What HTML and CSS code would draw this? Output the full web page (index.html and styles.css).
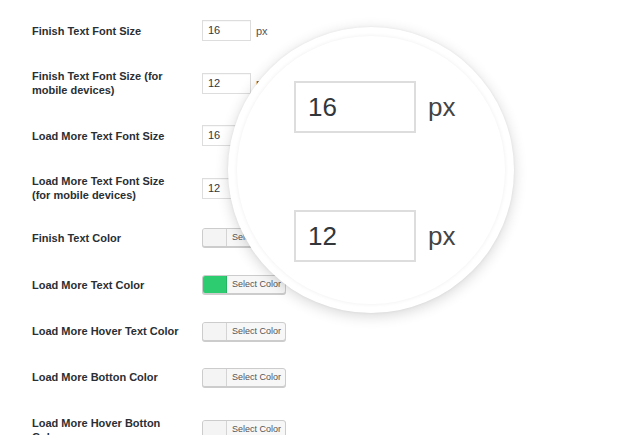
FILE: index.html
```html
<!DOCTYPE html>
<html>
<head>
<meta charset="utf-8">
<link rel="stylesheet" href="styles.css">
</head>
<body>
<div class="page">
  <div class="form">
    <div class="row r53">
      <div class="label">Finish Text Font Size</div>
      <div class="field"><span class="input">16</span><span class="unit">px</span></div>
    </div>
    <div class="row r52">
      <div class="label">Finish Text Font Size (for mobile devices)</div>
      <div class="field"><span class="input">12</span><span class="unit">px</span></div>
    </div>
    <div class="row r53">
      <div class="label">Load More Text Font Size</div>
      <div class="field"><span class="input">16</span><span class="unit">px</span></div>
    </div>
    <div class="row r52">
      <div class="label">Load More Text Font Size (for mobile devices)</div>
      <div class="field"><span class="input">12</span><span class="unit">px</span></div>
    </div>
    <div class="row r47">
      <div class="label">Finish Text Color</div>
      <div class="field"><span class="picker"><span class="swatch"></span><span class="ptext">Select Color</span></span></div>
    </div>
    <div class="row r47">
      <div class="label">Load More Text Color</div>
      <div class="field"><span class="picker"><span class="swatch green"></span><span class="ptext">Select Color</span></span></div>
    </div>
    <div class="row r46">
      <div class="label">Load More Hover Text Color</div>
      <div class="field"><span class="picker"><span class="swatch"></span><span class="ptext">Select Color</span></span></div>
    </div>
    <div class="row r46">
      <div class="label">Load More Botton Color</div>
      <div class="field"><span class="picker"><span class="swatch"></span><span class="ptext">Select Color</span></span></div>
    </div>
    <div class="row r60">
      <div class="label">Load More Hover Botton Color</div>
      <div class="field"><span class="picker"><span class="swatch"></span><span class="ptext">Select Color</span></span></div>
    </div>
  </div>

  <div class="magnifier">
    <div class="lens">
      <div class="zrow"><span class="zinput">16</span><span class="zunit">px</span></div>
      <div class="zrow"><span class="zinput">12</span><span class="zunit">px</span></div>
    </div>
  </div>
</div>
</body>
</html>
```

FILE: styles.css
```css
html, body {
  margin: 0;
  padding: 0;
  background: #ffffff;
}
body {
  font-family: "Liberation Sans", Arial, sans-serif;
  color: #23282d;
  overflow: hidden;
  width: 630px;
  height: 435px;
}
.page {
  position: relative;
  width: 630px;
  height: 435px;
  overflow: hidden;
}
.form {
  padding-top: 4px;
  padding-left: 32px;
}
.row {
  display: flex;
  align-items: center;
}
.r53 { height: 53px; }
.r52 { height: 52px; }
.r47 { height: 47px; }
.r46 { height: 46px; }
.r60 { height: 59px; }
.label {
  width: 150px;
  margin-right: 20px;
  font-size: 11px;
  line-height: 14px;
  font-weight: bold;
  color: #2a2f34;
}
.field {
  display: flex;
  align-items: center;
}
.input {
  box-sizing: border-box;
  width: 49px;
  height: 21px;
  border: 1px solid #dddddd;
  padding-left: 5px;
  font-size: 11px;
  line-height: 19px;
  color: #32373c;
  background: #fff;
  box-shadow: inset 0 1px 1px rgba(0,0,0,0.03);
}
.unit {
  margin-left: 5px;
  font-size: 11px;
  color: #555;
}
.picker {
  box-sizing: border-box;
  display: flex;
  width: 84px;
  height: 19px;
  border: 1px solid #cccccc;
  border-radius: 3px;
  background: #f7f7f7;
  box-shadow: 0 1px 0 #cccccc;
  overflow: hidden;
}
.swatch {
  width: 23px;
  height: 100%;
  border-right: 1px solid #d4d4d4;
  background: #f4f4f4;
}
.swatch.green {
  background: #2ecc71;
  border-right-color: #27b463;
}
.ptext {
  padding-left: 5px;
  font-size: 9px;
  line-height: 17px;
  color: #555;
}
.magnifier {
  position: absolute;
  left: 228px;
  top: 27px;
  width: 286px;
  height: 286px;
  border-radius: 50%;
  background: #ffffff;
  box-shadow: 0 3px 14px rgba(0,0,0,0.16), 0 0 3px rgba(0,0,0,0.06);
}
.lens {
  box-sizing: border-box;
  position: absolute;
  left: 9px;
  top: 9px;
  width: 268px;
  height: 268px;
  border-radius: 50%;
  box-shadow: 0 0 4px rgba(0,0,0,0.07);
  padding-top: 45px;
  padding-left: 57px;
  display: flex;
  flex-direction: column;
  gap: 77px;
}
.zrow {
  display: flex;
  align-items: center;
}
.zinput {
  box-sizing: border-box;
  width: 122px;
  height: 52px;
  border: 2px solid #dddddd;
  padding-left: 12px;
  font-size: 26px;
  line-height: 48px;
  color: #32373c;
}
.zunit {
  margin-left: 12px;
  font-size: 26px;
  color: #444;
}
```
